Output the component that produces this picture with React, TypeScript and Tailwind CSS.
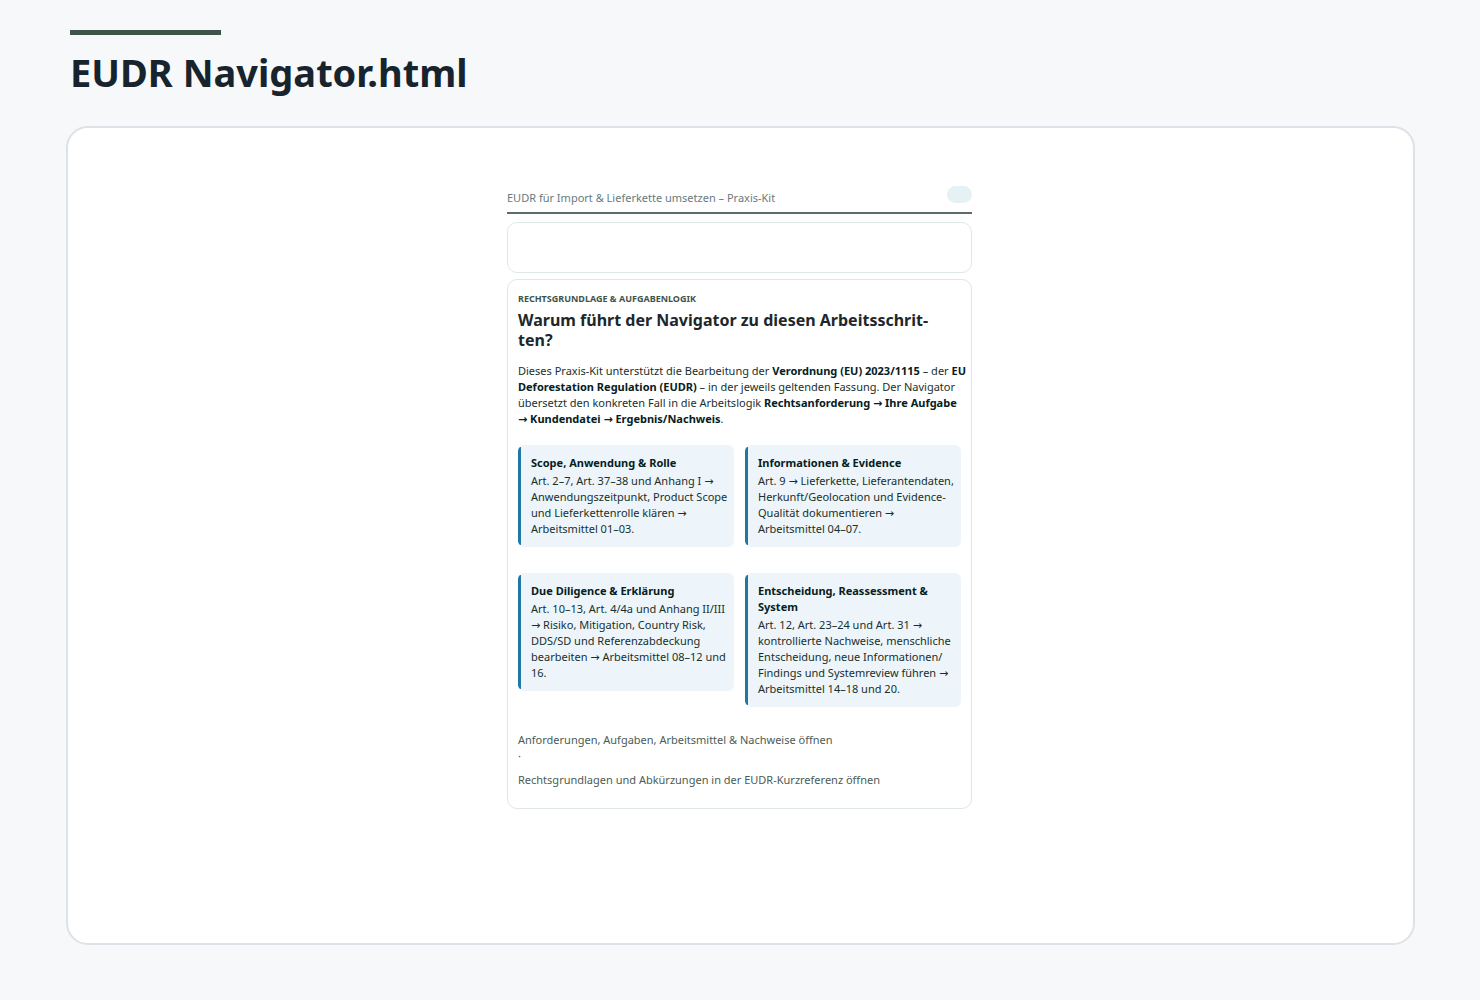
const cards = [
  {
    title: 'Scope, Anwendung & Rolle',
    lines: ['Art. 2–7, Art. 37–38 und Anhang I →', 'Anwendungszeitpunkt, Product Scope', 'und Lieferkettenrolle klären →', 'Arbeitsmittel 01–03.'],
  },
  {
    title: 'Informationen & Evidence',
    lines: ['Art. 9 → Lieferkette, Lieferantendaten,', 'Herkunft/Geolocation und Evidence-', 'Qualität dokumentieren →', 'Arbeitsmittel 04–07.'],
  },
  {
    title: 'Due Diligence & Erklärung',
    lines: ['Art. 10–13, Art. 4/4a und Anhang II/III', '→ Risiko, Mitigation, Country Risk,', 'DDS/SD und Referenzabdeckung', 'bearbeiten → Arbeitsmittel 08–12 und', '16.'],
  },
  {
    title: 'Entscheidung, Reassessment & System',
    lines: ['Art. 12, Art. 23–24 und Art. 31 →', 'kontrollierte Nachweise, menschliche', 'Entscheidung, neue Informationen/', 'Findings und Systemreview führen →', 'Arbeitsmittel 14–18 und 20.'],
  },
];

interface TaskCardProps {
  title: string;
  lines: string[];
}

function TaskCard({ title, lines }: TaskCardProps) {
  return (
    <article className="flex overflow-hidden rounded-md bg-[#edf5fb]">
      {/* Accent bar */}
      <span className="my-[2px] w-[3px] shrink-0 rounded-l-sm bg-[#1f78a4]" />
      <div className="py-[10px] pr-1 pl-[10px]">
        <h3 className="mb-[2px] font-bold text-[#06201d]">{title}</h3>
        <p>
          {lines.map((line) => (
            <span key={line} className="block whitespace-nowrap">
              {line}
            </span>
          ))}
        </p>
      </div>
    </article>
  );
}

export default function App() {
  return (
    <div className="flex min-h-screen flex-col bg-[#f6f8fa] pt-[30px] pr-[65px] pb-[55px] pl-[66px] font-['Noto_Sans','DejaVu_Sans',sans-serif] text-[#17302c]">
      <header className="px-1">
        <div className="h-[5px] w-[151px] bg-[#3f5449]" />
        <h1 className="mt-[11px] text-[38px] leading-[52px] font-bold text-[#17242e]">EUDR Navigator.html</h1>
      </header>

      <main className="mt-7 grow rounded-[22px] border-2 border-[#dce2e7] bg-white pt-[58px] pr-[18px] pb-8 pl-4">
        <div className="mx-auto w-full max-w-[465px] text-[11px] leading-[16px]">
          <div className="flex items-start justify-between border-b-2 border-[#5c6c68] pb-[6px] text-[#687a80]">
            <span className="mt-1">EUDR für Import &amp; Lieferkette umsetzen – Praxis-Kit</span>
            <span className="h-[17px] w-[25px] rounded-full bg-[#e5f1f4]" />
          </div>

          <section className="mt-2 h-[51px] rounded-[10px] border border-[#dfe8e9]" />

          <section className="mt-[6px] rounded-[10px] border border-[#dfe6e6] px-[10px] pt-[11px] pb-5">
            <p className="text-[9px] font-bold text-[#3f544b]">RECHTSGRUNDLAGE &amp; AUFGABENLOGIK</p>
            <h2 className="mt-[3px] text-[16px] leading-[20px] font-bold text-[#20272a]">
              Warum führt der Navigator zu diesen Arbeitsschrit-
              <br />
              ten?
            </h2>
            <p className="mt-[13px] whitespace-nowrap [&_b]:text-[#06201d]">
              Dieses Praxis-Kit unterstützt die Bearbeitung der <b>Verordnung (EU) 2023/1115</b> – der <b>EU</b>
              <br />
              <b>Deforestation Regulation (EUDR)</b> – in der jeweils geltenden Fassung. Der Navigator
              <br />
              übersetzt den konkreten Fall in die Arbeitslogik <b>Rechtsanforderung → Ihre Aufgabe</b>
              <br />
              <b>→ Kundendatei → Ergebnis/Nachweis</b>.
            </p>

            <div className="mt-[18px] grid grid-cols-2 items-start gap-x-[11px] gap-y-[26px]">
              {cards.map((card) => (
                <TaskCard key={card.title} {...card} />
              ))}
            </div>

            <div className="mt-[25px] text-[#4a5c55]">
              <a href="#anforderungen" className="block">Anforderungen, Aufgaben, Arbeitsmittel &amp; Nachweise öffnen</a>
              <span className="block">·</span>
              <a href="#kurzreferenz" className="mt-2 block">Rechtsgrundlagen und Abkürzungen in der EUDR-Kurzreferenz öffnen</a>
            </div>
          </section>
        </div>
      </main>
    </div>
  );
}
